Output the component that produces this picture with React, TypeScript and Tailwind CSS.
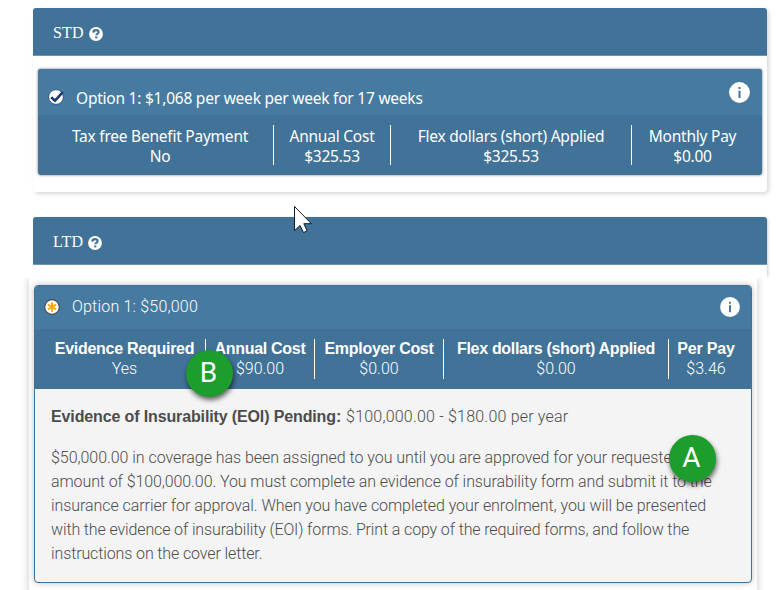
import type { ReactNode } from "react";

function HelpIcon() {
  return (
    <svg width="14" height="14" viewBox="0 0 14 14" className="block">
      <circle cx="7" cy="7" r="6.9" fill="#fff" />
      <path d="M4.3 5.6C4.4 3.8 5.6 3.1 7 3.1c1.5 0 2.6.8 2.6 2.1 0 1.7-2.3 1.6-2.3 3.1" fill="none" stroke="#417298" strokeWidth="2.1" />
      <rect x="6.2" y="9.4" width="2.2" height="2" fill="#417298" />
    </svg>
  );
}

function InfoIcon({ size }: { size: number }) {
  return (
    <svg width={size} height={size} viewBox="0 0 21 21" className="block">
      <circle cx="10.5" cy="10.5" r="10.4" fill="#fff" />
      <rect x="9.5" y="5" width="2" height="2" fill="#417298" />
      <rect x="9.5" y="8.6" width="2" height="7.4" fill="#417298" />
    </svg>
  );
}

function CheckIcon() {
  return (
    <svg width="17" height="16" viewBox="0 0 17 16" className="block">
      <circle cx="8" cy="8" r="7.3" fill="#fff" stroke="#27406f" strokeWidth="0.7" />
      <path d="M3.2 8.2 7 11.6 14.8 3.2" fill="none" stroke="#1b3a70" strokeWidth="2.6" />
    </svg>
  );
}

function PendingIcon() {
  return (
    <svg width="16" height="16" viewBox="0 0 16 16" className="block">
      <circle cx="8" cy="8" r="7.3" fill="#fff" stroke="#4b4b50" strokeWidth="1.2" />
      <path d="M8 3.2v9.6M3.8 5.6l8.4 4.8M12.2 5.6l-8.4 4.8" stroke="#fca90a" strokeWidth="2" />
    </svg>
  );
}

function Strong({ children }: { children: ReactNode }) {
  return <b className="font-['Liberation_Sans',sans-serif] font-bold">{children}</b>;
}

function Stat({ label, value, className }: { label: ReactNode; value: string; className: string }) {
  return (
    <div className={`h-10 shrink-0 whitespace-nowrap text-center leading-5 ${className}`}>
      <div className="flex justify-center">{label}</div>
      <div className="flex justify-center">{value}</div>
    </div>
  );
}

function SectionHeader({ title }: { title: string }) {
  return (
    <div className="flex h-12 items-center gap-[5px] rounded-t-[3px] border-b border-[#6d94b1] bg-[#417298] pl-5 pt-[2px] font-['Liberation_Serif',serif] text-[16px] tracking-[0.15px] text-white">
      <span>{title}</span>
      <span className="mt-[3px]"><HelpIcon /></span>
    </div>
  );
}

const notice = [
  { text: "$50,000.00 in coverage has been assigned to you until you are approved for your requested", cls: "tracking-[-0.045px]" },
  { text: "amount of $100,000.00. You must complete an evidence of insurability form and submit it to the", cls: "tracking-[-0.09px]" },
  { text: "insurance carrier for approval. When you have completed your enrolment, you will be presented", cls: "tracking-[-0.06px]" },
  { text: "with the evidence of insurability (EOI) forms. Print a copy of the required forms, and follow the", cls: "tracking-[-0.13px]" },
  { text: "instructions on the cover letter.", cls: "tracking-[-0.12px]" },
];

export default function App() {
  return (
    <div className="relative h-[590px] w-[777px] overflow-hidden bg-white pt-2">
      <section className="ml-[33px] h-[184px] w-[734px] rounded-[4px] shadow-[2px_2px_4px_rgba(0,0,0,0.16)]">
        <SectionHeader title="STD" />
        <div className="mx-[5px] mt-[13px] h-[106px] overflow-hidden rounded-[3px] bg-[#417298] font-['Noto_Sans',sans-serif] text-[15.5px] tracking-[-0.23px] text-white shadow-[0_0_3px_rgba(0,0,0,0.55)]">
          <div className="flex h-[46px] bg-[#467aa1] pl-[10px]">
            <span className="mt-[20px]"><CheckIcon /></span>
            <span className="ml-[11px] mt-[19px] whitespace-nowrap leading-5">Option 1: $1,068 per week per week for 17 weeks</span>
            <span className="ml-auto mr-3 mt-[13px]"><InfoIcon size={21} /></span>
          </div>
          <div className="flex pl-[9px] pt-[10px]">
            <Stat label="Tax free Benefit Payment" value="No" className="w-[227px] border-r pt-px" />
            <Stat label="Annual Cost" value="$325.53" className="w-[117px] border-r pt-px" />
            <Stat label="Flex dollars (short) Applied" value="$325.53" className="w-[241px] border-r pt-px" />
            <Stat label="Monthly Pay" value="$0.00" className="w-[121px] pt-px" />
          </div>
        </div>
      </section>

      <div className="ml-[33px] mt-[25px] h-[61px] w-[734px] rounded-t-[3px] shadow-[2px_0_3px_-1px_rgba(0,0,0,0.2)]">
        <SectionHeader title="LTD" />
      </div>

      <section className="relative flex h-[312px] w-[777px] overflow-hidden bg-white pl-[29px]">
        <div className="h-[340px] w-[728px] px-[5px] pt-[7px] shadow-[0_0_8px_rgba(0,0,0,0.22)]">
          <div className="h-[298px] overflow-hidden rounded-[4px] border border-[#417298] bg-[#f4f4f4] font-['Roboto',sans-serif] text-[16px] font-light shadow-[0_0_6px_rgba(0,0,0,0.25)]">
            <div className="flex h-[43px] bg-[#467aa1] pl-[9px] text-white">
              <span className="mt-[13px]"><PendingIcon /></span>
              <span className="ml-[12px] mt-[11px] whitespace-nowrap leading-5 tracking-[0.2px]">Option 1: $50,000</span>
              <span className="ml-auto mr-[11px] mt-[11px]"><InfoIcon size={20} /></span>
            </div>
            <div className="flex h-[60px] bg-[#417298] pl-[9px] pt-[10px] text-white">
              <Stat label={<span className="tracking-[-0.27px]"><Strong>Evidence Required</Strong></span>} value="Yes" className="w-[162px] border-r" />
              <Stat label={<span className="tracking-[-0.3px]"><Strong>Annual Cost</Strong></span>} value="$90.00" className="w-[109px] border-r" />
              <Stat label={<span className="tracking-[-0.3px]"><Strong>Employer Cost</Strong></span>} value="$0.00" className="w-[129px] border-r" />
              <Stat label={<span className="tracking-[-0.3px]"><Strong>Flex dollars (short) Applied</Strong></span>} value="$0.00" className="w-[225px] border-r" />
              <Stat label={<span className="tracking-[-0.2px]"><Strong>Per Pay</Strong></span>} value="$3.46" className="w-[74px]" />
            </div>
            <div className="pl-4 pt-[16px] leading-6 text-[#4c4c4c]">
              <p className="flex gap-[5px] whitespace-nowrap">
                <span className="tracking-[-0.13px]"><Strong>Evidence of Insurability (EOI) Pending:</Strong></span>
                <span className="tracking-[0.2px]">$100,000.00 - $180.00 per year</span>
              </p>
              <div className="mt-[17px] whitespace-nowrap">
                {notice.map((line) => (
                  <div key={line.text}><span className={line.cls}>{line.text}</span></div>
                ))}
              </div>
            </div>
          </div>
        </div>
      </section>

      <div className="absolute left-[186px] top-[350px] flex size-[47px] items-center justify-center rounded-full bg-[#1d9d2c] pb-px pr-[2px] font-['Roboto',sans-serif] text-[28px] text-white shadow-[1px_3px_5px_rgba(0,0,0,0.6)]">B</div>
      <div className="absolute left-[669px] top-[435px] flex size-[47px] items-center justify-center rounded-full bg-[#1d9d2c] pb-px pr-[2px] font-['Roboto',sans-serif] text-[28px] text-white shadow-[1px_3px_5px_rgba(0,0,0,0.6)]">A</div>

      <svg className="absolute left-[293px] top-[205px]" width="20" height="29" viewBox="0 0 20 29">
        <path d="M1.5 1.5v24l5.5-5 3.5 7 3.7-1.6-3.4-7.2h7.6z" fill="#fff" stroke="#111b2b" strokeWidth="1" />
      </svg>
    </div>
  );
}
